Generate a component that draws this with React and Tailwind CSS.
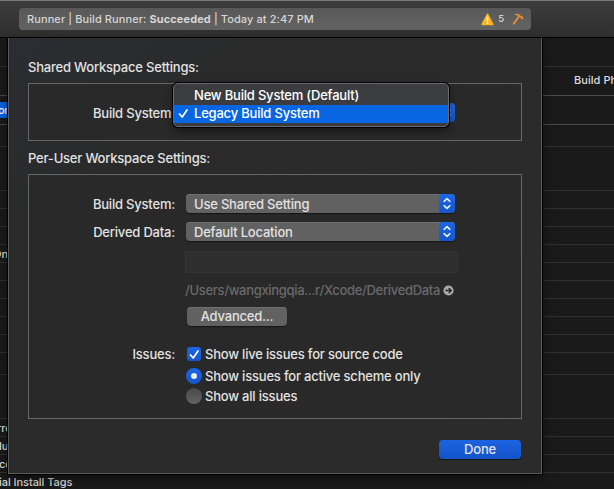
const ROWS = [
  { h: 'h-[29px]', line: 'border-[#303030]' },
  { h: 'h-[29px]', line: 'border-[#4a4a4a]', right: 'Build Phases' },
  { h: 'h-[29px]', line: 'border-[#4a4a4a]', tag: 'on' },
  { h: 'h-[22px]', line: 'border-[#303030]' },
  { h: 'h-[44px]', line: 'border-[#303030]' },
  { h: 'h-[18px]', line: 'border-[#303030]' },
  { h: 'h-[18px]', line: 'border-[#303030]' },
  { h: 'h-[18px]', line: 'border-[#303030]' },
  { h: 'h-[18px]', line: 'border-[#303030]', left: 'On', shift: '-ml-[7px] mt-[2px]' },
  { h: 'h-[18px]', line: 'border-[#303030]' },
  { h: 'h-[18px]', line: 'border-[#303030]' },
  { h: 'h-[18px]', line: 'border-[#303030]' },
  { h: 'h-[18px]', line: 'border-[#303030]' },
  { h: 'h-[18px]', line: 'border-[#303030]' },
  { h: 'h-[22px]', line: 'border-[#303030]' },
  { h: 'h-[44px]', line: 'border-[#303030]' },
  { h: 'h-[18px]', line: 'border-[#303030]', left: 'rre', shift: '-ml-[3px] mt-[2px]' },
  { h: 'h-[18px]', line: 'border-[#303030]', left: 'du', shift: '-ml-[5px] mt-[2px]' },
  { h: 'h-[18px]', line: 'border-[#303030]', left: 'ce', shift: '-ml-[1px] mt-[2px]' },
  { h: 'h-[18px]', line: 'border-transparent', left: 'ial Install Tags', shift: '-ml-[1px] mt-[1px]' },
];

function Backdrop() {
  return (
    <div className="flex flex-col overflow-hidden text-[11px] font-medium text-[#dcdcdc]">
      {ROWS.map((r, i) => (
        <div key={i} className={`flex shrink-0 items-center justify-between border-b whitespace-nowrap ${r.h} ${r.line}`}>
          {r.tag ? (
            <span className="-ml-[2px] flex h-4 w-5 items-center bg-[#0a63e0] text-[11px] tracking-[-0.3px] text-white">{r.tag}</span>
          ) : (
            <span className={`tracking-[-0.05px] ${r.shift || ''}`}>{r.left}</span>
          )}
          {r.right && <span className="mb-[2px] w-[40px] overflow-hidden tracking-[0.05px]">{r.right}</span>}
        </div>
      ))}
    </div>
  );
}

function Toolbar() {
  return (
    <header className="flex h-[38px] shrink-0 items-start border-t border-b border-t-[#777977] border-b-black bg-linear-to-b from-[#3c3c3c] to-[#2f2f2f] pt-[7px] pl-[19px]">
      <div className="flex h-[22px] w-[512px] items-center rounded-[4px] bg-linear-to-b from-[#585858] to-[#636363] pl-2 text-[11px] text-[#d6d6d6]">
        <span className="tracking-[0.09px] whitespace-pre">
          Runner | Build Runner: <b className="font-bold">Succeeded</b> | Today at 2:47 PM
        </span>
        <svg className="ml-auto" width="13" height="13" viewBox="0 0 13 13">
          <path d="M6.5 1.3 11.8 11.4H1.2Z" fill="#fbb51e" stroke="#fbb51e" strokeWidth="1.6" strokeLinejoin="round" />
          <path d="M6.5 4.2V8" stroke="#fff" strokeWidth="1.5" strokeLinecap="round" />
          <circle cx="6.5" cy="10.2" r=".85" fill="#fff" />
        </svg>
        <span className="ml-[4px] text-[9.5px]">5</span>
        <svg className="mr-[7px] ml-[8px]" width="12" height="12" viewBox="0 0 12 12">
          <path d="M2 1.4C4 .4 6.4.6 8 2L9.3 3.3 10.2 3.3 11.6 5 10.2 6.5 8.8 5.2 8.7 4.5 6.3 2.9C5 2 3.5 1.8 2 1.4Z" fill="#ed8e2d" />
          <path d="M6.8 3.7 1.7 10.8" fill="none" stroke="#ed8e2d" strokeWidth="1.9" strokeLinecap="round" />
        </svg>
      </div>
    </header>
  );
}

function Chevrons() {
  return (
    <span className="flex h-full w-4 items-center justify-center rounded-r-[4px] bg-linear-to-b from-[#1c66e4] to-[#1556cc]">
      <svg width="10" height="13" viewBox="0 0 10 13" fill="none" stroke="#e8f0ff" strokeWidth="1.6" strokeLinecap="round" strokeLinejoin="round">
        <path d="M2.1 4.3 5 1.6 7.9 4.3M2.1 8.7 5 11.4 7.9 8.7" />
      </svg>
    </span>
  );
}

function Popup({ children }) {
  return (
    <div className="flex h-[19px] w-[269px] items-center justify-between rounded-[4px] bg-[#616161] pl-2 shadow-[inset_0_1px_0_#707070,0_1px_1px_#151515]">
      <span className="pt-px">{children}</span>
      <Chevrons />
    </div>
  );
}

function Label({ children }) {
  return <span className="mr-[11px] w-[118px] text-right">{children}</span>;
}

function Check({ className }) {
  return (
    <svg className={className} width="11" height="11" viewBox="0 0 11 11" fill="none" stroke="#fff" strokeWidth="1.7" strokeLinecap="round" strokeLinejoin="round">
      <path d="M1.5 6 4.2 9 9 2" />
    </svg>
  );
}

function Sheet() {
  return (
    <section className="absolute top-[38px] left-2 flex h-[436px] w-[534px] flex-col border border-t-0 border-[#5a5a5a] bg-[#2a2a2a] bg-linear-to-br from-[#2a2d32] via-[#2a2a2a] via-25% to-[#2b2b2b] px-[19px] pt-5 leading-[18px] tracking-[-0.2px] shadow-[0_0_0_1px_#000,0_4px_10px_#0008]">
      <h2>Shared Workspace Settings:</h2>
      <div className="relative mt-[7px] flex h-[58px] w-[494px] items-center border border-[#666] bg-[#292929]">
        <span className="mt-[2px] ml-16">Build System:</span>
        <span className="ml-auto mr-[66px] flex h-[19px]">
          <Chevrons />
        </span>
        <ul className="absolute -top-px left-[144px] flex h-[44px] w-[276px] flex-col rounded-[5px] border border-[#6a6a6a] bg-[#3b3c3f] pt-[3px] text-white shadow-[0_0_0_1px_#000,0_4px_8px_#0007]">
          <li className="h-[18px] pl-5 leading-[17px]">New Build System (Default)</li>
          <li className="flex h-[18px] bg-[#0966e2] pl-1 leading-[17px]">
            <Check className="mt-[3px] mr-[5px]" />
            Legacy Build System
          </li>
        </ul>
      </div>
      <h2 className="mt-[8px]">Per-User Workspace Settings:</h2>
      <div className="mt-[7px] flex h-[245px] w-[494px] flex-col border border-[#666] bg-[#292929] pt-[19px] pl-7">
        <div className="flex items-center">
          <Label>Build System:</Label>
          <Popup>Use Shared Setting</Popup>
        </div>
        <div className="mt-[9px] flex items-center">
          <Label>Derived Data:</Label>
          <Popup>Default Location</Popup>
        </div>
        <div className="mt-[10px] ml-[128px] h-[22px] w-[273px] border border-[#343434] bg-[#2e2e2e]" />
        <div className="mt-[8px] ml-[128px] flex items-center text-[#6a6a6a]">
          <span className="tracking-[-0.32px]">/Users/wangxingqia...r/Xcode/DerivedData</span>
          <svg className="ml-[3px]" width="11" height="11" viewBox="0 0 11 11">
            <circle cx="5.5" cy="5.5" r="5.1" fill="#aaa" />
            <path d="M2.4 5.5H8M5.7 3 8.2 5.5 5.7 8" fill="none" stroke="#292929" strokeWidth="1.5" />
          </svg>
        </div>
        <button className="mt-[8px] ml-[130px] h-[19px] w-[100px] rounded-[4px] bg-[#616161] leading-[19px] shadow-[inset_0_1px_0_#707070,0_1px_1px_#151515]">
          Advanced...
        </button>
        <div className="mt-[19px] flex items-center">
          <Label>Issues:</Label>
          <span className="mr-[4px] ml-[1px] flex size-[14px] items-center justify-center rounded-[3px] bg-linear-to-b from-[#1c66e4] to-[#1556cc]">
            <Check />
          </span>
          Show live issues for source code
        </div>
        <div className="mt-[4px] ml-[129px] flex items-center">
          <span className="mr-[3px] flex size-4 items-center justify-center rounded-full bg-linear-to-b from-[#1c66e4] to-[#1556cc]">
            <i className="size-1.5 rounded-full bg-[#e8f0ff]" />
          </span>
          Show issues for active scheme only
        </div>
        <div className="mt-[2px] ml-[129px] flex items-center">
          <span className="mr-[3px] size-4 rounded-full bg-linear-to-b from-[#484848] to-[#636363]" />
          Show all issues
        </div>
      </div>
      <button className="mt-[21px] ml-[411px] h-[19px] w-[82px] rounded-[4px] bg-linear-to-b from-[#1c64e2] to-[#1453c8] leading-[19px] shadow-[0_1px_1px_#151515]">
        Done
      </button>
    </section>
  );
}

export default function App() {
  return (
    <main className="relative flex h-[489px] w-[614px] flex-col overflow-hidden bg-[#1a1a1a] font-['Inter',sans-serif] text-[13px] font-medium text-[#e2e2e2]">
      <Toolbar />
      <Backdrop />
      <Sheet />
    </main>
  );
}
